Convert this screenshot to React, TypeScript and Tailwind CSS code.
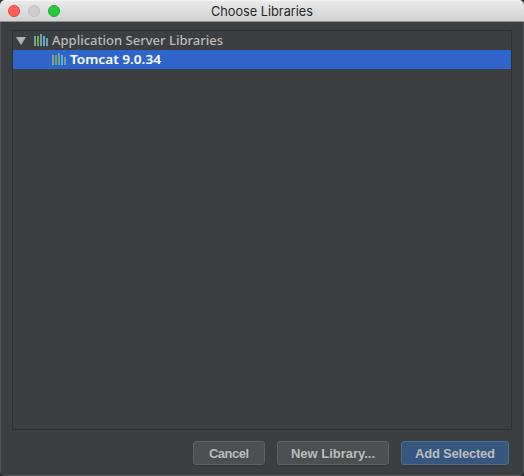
import React from "react";

function LibraryIcon() {
  return (
    <svg className="block h-3 w-3.5 shrink-0" viewBox="0 0 14 12" shapeRendering="crispEdges">
      <path d="M0 2h2v10H0zM6 0h2v12H6zM12 4h2v8h-2z" fill="#8597a3" />
      <path d="M3 2h2v10H3z" fill="#62b543" />
      <path d="M9 2h2v10H9z" fill="#40b6e0" />
    </svg>
  );
}

function Label({ width, className, children }: { width: number; className: string; children: string }) {
  return (
    <svg width={width} height="19" className={`block shrink-0 overflow-visible font-['Noto_Sans',sans-serif] text-[13px] ${className}`}>
      <text x="0" y="14" textLength={width} lengthAdjust="spacingAndGlyphs">
        {children}
      </text>
    </svg>
  );
}

function Button({ className, textWidth, children }: { className: string; textWidth: number; children: string }) {
  return (
    <button
      className={`flex h-6 items-center justify-center rounded-[3px] border font-['Liberation_Sans',Arial,sans-serif] font-bold shadow-[0_1px_1px_#34383a] ${className}`}
    >
      <svg width={textWidth} height="18" className="block overflow-visible text-[13px]">
        <text x="0" y="14" textLength={textWidth} lengthAdjust="spacing" fill="#bbbbbb">
          {children}
        </text>
      </svg>
    </button>
  );
}

export default function App() {
  return (
    <div className="h-[476px] w-[524px] overflow-hidden bg-[#292b2c]">
      <div className="flex h-full flex-col overflow-hidden rounded-[5px] bg-[#3c3f41]">
        <header className="grid h-[22px] shrink-0 grid-cols-[1fr_auto_1fr] items-center border-t border-b border-t-[#f5f5f5] border-b-[#929292] bg-linear-to-b from-[#e9e9e9] to-[#d2d2d2]">
          <div className="flex gap-2 pl-2">
            <span className="size-3 rounded-full border border-[#e2463f] bg-[#ff5f57]" />
            <span className="size-3 rounded-full border border-[#bcbcbc] bg-[#cdcdcd]" />
            <span className="size-3 rounded-full border border-[#1dad2b] bg-[#28c940]" />
          </div>
          <h1 className="font-[Inter,sans-serif] text-[13px] leading-5">
            <svg width="102" height="20" className="block overflow-visible">
              <text x="0" y="15" textLength="102" lengthAdjust="spacingAndGlyphs" fill="#292929">
                Choose Libraries
              </text>
            </svg>
          </h1>
        </header>
        <main className="flex flex-1 flex-col border-x border-b border-[#505355] px-[11px] pt-2">
          <div className="h-[400px] shrink-0 border border-[#2f3234]">
            <div className="flex h-[19px] items-start">
              <svg className="mt-1.5 ml-[3px] block h-2 w-2.5 shrink-0" viewBox="0 0 10 8">
                <path d="M0 0h10L5 8z" fill="#afb1b3" />
              </svg>
              <div className="mt-[3px] mr-1 ml-2">
                <LibraryIcon />
              </div>
              <Label width={171} className="fill-[#bbbbbb] font-medium">
                Application Server Libraries
              </Label>
            </div>
            <div className="flex h-[19px] items-start gap-1 bg-[#2f65ca] pl-[39px]">
              <div className="mt-[3px]">
                <LibraryIcon />
              </div>
              <Label width={91} className="fill-white font-semibold">
                Tomcat 9.0.34
              </Label>
            </div>
          </div>
          <footer className="mt-[11px] flex justify-end gap-3 pr-[3px]">
            <Button className="w-[72px] border-[#5e6162] bg-[#4c5052]" textWidth={40}>
              Cancel
            </Button>
            <Button className="w-[112px] border-[#5e6162] bg-[#4c5052]" textWidth={84}>
              New Library...
            </Button>
            <Button className="w-[108px] border-[#4c708c] bg-[#365880]" textWidth={80}>
              Add Selected
            </Button>
          </footer>
        </main>
      </div>
    </div>
  );
}
